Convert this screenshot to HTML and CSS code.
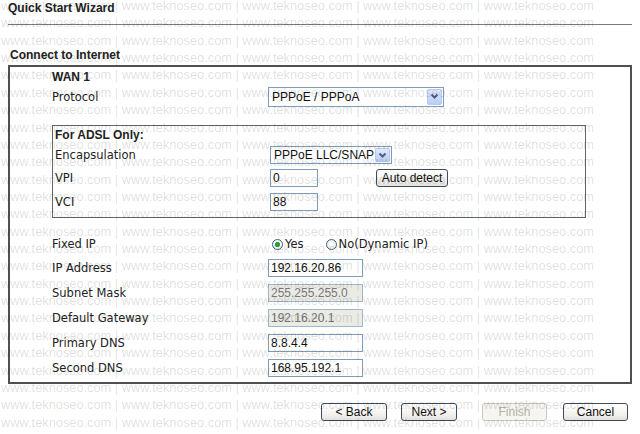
FILE: index.html
```html
<!DOCTYPE html>
<html lang="en">
<head>
  <meta charset="UTF-8">
  <title>Quick Start Wizard</title>
  <link rel="stylesheet" href="styles.css">
</head>
<body>
  <div class="page">
    <h1 class="title">Quick Start Wizard</h1>
    <h2 class="section-title">Connect to Internet</h2>

    <div class="panel">
      <div class="row row-head"><span class="label bold">WAN 1</span></div>
      <div class="row row-protocol">
        <span class="label">Protocol</span>
        <span class="select select-protocol">
          <select><option>PPPoE / PPPoA</option></select>
          <span class="arrow"><svg width="9" height="7" viewBox="0 0 9 7"><path d="M1.5 1.5 L4.5 4.5 L7.5 1.5" fill="none" stroke="#4d6185" stroke-width="2"/></svg></span>
        </span>
      </div>

      <div class="adsl">
        <div class="row row-adsl-head"><span class="label bold">For ADSL Only:</span></div>
        <div class="row row-encap">
          <span class="label">Encapsulation</span>
          <span class="select select-encap">
            <select><option>PPPoE LLC/SNAP</option></select>
            <span class="arrow"><svg width="9" height="7" viewBox="0 0 9 7"><path d="M1.5 1.5 L4.5 4.5 L7.5 1.5" fill="none" stroke="#4d6185" stroke-width="2"/></svg></span>
          </span>
        </div>
        <div class="row row-adsl">
          <span class="label">VPI</span>
          <span class="field">
            <input class="text short" value="0">
            <button class="btn btn-detect">Auto detect</button>
          </span>
        </div>
        <div class="row row-adsl">
          <span class="label">VCI</span>
          <span class="field"><input class="text short" value="88"></span>
        </div>
      </div>

      <div class="row row-fixed">
        <span class="label">Fixed IP</span>
        <span class="radio-group">
          <input type="radio" name="fixed" id="fixedYes" checked>
          <label for="fixedYes">Yes</label>
          <input type="radio" name="fixed" id="fixedNo" class="radio-no">
          <label for="fixedNo">No(Dynamic IP)</label>
        </span>
      </div>
      <div class="row row-ip">
        <span class="label">IP Address</span>
        <span class="field"><input class="text" value="192.16.20.86"></span>
      </div>
      <div class="row row-ip">
        <span class="label">Subnet Mask</span>
        <span class="field"><input class="text" value="255.255.255.0" disabled></span>
      </div>
      <div class="row row-ip">
        <span class="label">Default Gateway</span>
        <span class="field"><input class="text" value="192.16.20.1" disabled></span>
      </div>
      <div class="row row-ip">
        <span class="label">Primary DNS</span>
        <span class="field"><input class="text" value="8.8.4.4"></span>
      </div>
      <div class="row row-ip">
        <span class="label">Second DNS</span>
        <span class="field"><input class="text" value="168.95.192.1"></span>
      </div>
    </div>

    <div class="actions">
      <button class="btn btn-back">&lt; Back</button>
      <button class="btn btn-next">Next &gt;</button>
      <button class="btn btn-finish" disabled>Finish</button>
      <button class="btn btn-cancel">Cancel</button>
    </div>
  </div>

  <div class="watermark" aria-hidden="true">
    <div>www.teknoseo.com | www.teknoseo.com | www.teknoseo.com | www.teknoseo.com | www.teknoseo.com</div>
    <div>www.teknoseo.com | www.teknoseo.com | www.teknoseo.com | www.teknoseo.com | www.teknoseo.com</div>
    <div>www.teknoseo.com | www.teknoseo.com | www.teknoseo.com | www.teknoseo.com | www.teknoseo.com</div>
    <div>www.teknoseo.com | www.teknoseo.com | www.teknoseo.com | www.teknoseo.com | www.teknoseo.com</div>
    <div>www.teknoseo.com | www.teknoseo.com | www.teknoseo.com | www.teknoseo.com | www.teknoseo.com</div>
    <div>www.teknoseo.com | www.teknoseo.com | www.teknoseo.com | www.teknoseo.com | www.teknoseo.com</div>
    <div>www.teknoseo.com | www.teknoseo.com | www.teknoseo.com | www.teknoseo.com | www.teknoseo.com</div>
    <div>www.teknoseo.com | www.teknoseo.com | www.teknoseo.com | www.teknoseo.com | www.teknoseo.com</div>
    <div>www.teknoseo.com | www.teknoseo.com | www.teknoseo.com | www.teknoseo.com | www.teknoseo.com</div>
    <div>www.teknoseo.com | www.teknoseo.com | www.teknoseo.com | www.teknoseo.com | www.teknoseo.com</div>
    <div>www.teknoseo.com | www.teknoseo.com | www.teknoseo.com | www.teknoseo.com | www.teknoseo.com</div>
    <div>www.teknoseo.com | www.teknoseo.com | www.teknoseo.com | www.teknoseo.com | www.teknoseo.com</div>
    <div>www.teknoseo.com | www.teknoseo.com | www.teknoseo.com | www.teknoseo.com | www.teknoseo.com</div>
    <div>www.teknoseo.com | www.teknoseo.com | www.teknoseo.com | www.teknoseo.com | www.teknoseo.com</div>
    <div>www.teknoseo.com | www.teknoseo.com | www.teknoseo.com | www.teknoseo.com | www.teknoseo.com</div>
    <div>www.teknoseo.com | www.teknoseo.com | www.teknoseo.com | www.teknoseo.com | www.teknoseo.com</div>
    <div>www.teknoseo.com | www.teknoseo.com | www.teknoseo.com | www.teknoseo.com | www.teknoseo.com</div>
    <div>www.teknoseo.com | www.teknoseo.com | www.teknoseo.com | www.teknoseo.com | www.teknoseo.com</div>
    <div>www.teknoseo.com | www.teknoseo.com | www.teknoseo.com | www.teknoseo.com | www.teknoseo.com</div>
    <div>www.teknoseo.com | www.teknoseo.com | www.teknoseo.com | www.teknoseo.com | www.teknoseo.com</div>
    <div>www.teknoseo.com | www.teknoseo.com | www.teknoseo.com | www.teknoseo.com | www.teknoseo.com</div>
    <div>www.teknoseo.com | www.teknoseo.com | www.teknoseo.com | www.teknoseo.com | www.teknoseo.com</div>
    <div>www.teknoseo.com | www.teknoseo.com | www.teknoseo.com | www.teknoseo.com | www.teknoseo.com</div>
    <div>www.teknoseo.com | www.teknoseo.com | www.teknoseo.com | www.teknoseo.com | www.teknoseo.com</div>
    <div>www.teknoseo.com | www.teknoseo.com | www.teknoseo.com | www.teknoseo.com | www.teknoseo.com</div>
    <div>www.teknoseo.com | www.teknoseo.com | www.teknoseo.com | www.teknoseo.com | www.teknoseo.com</div>
  </div>
</body>
</html>
```

FILE: styles.css
```css
body {
  margin: 0;
  background: #fff;
  font-family: "DejaVu Sans", Verdana, sans-serif;
  font-size: 11.5px;
  color: #222;
}
.page {
  width: 624px;
  padding-left: 8px;
}
.title {
  margin: 0;
  padding: 1px 0 9px;
  font: bold 12px/14px "Liberation Sans", Arial, sans-serif;
  color: #222;
  border-bottom: 1px solid #7a7a7a;
}
.section-title {
  margin: 23px 0 3px 2px;
  font: bold 12px/14px "Liberation Sans", Arial, sans-serif;
  color: #222;
}
.panel {
  box-sizing: border-box;
  width: 624px;
  border: 2px solid #505050;
  padding: 0 0 2px 42px;
}
.row {
  display: grid;
  grid-template-columns: 216px auto;
  align-items: center;
}
.bold {
  font: bold 12px "Liberation Sans", Arial, sans-serif;
  color: #222;
}
.row-head {
  height: 19px;
}
.row-protocol {
  height: 21px;
}
.adsl {
  box-sizing: border-box;
  width: 534px;
  margin-top: 18px;
  border: 1px solid #666;
  padding: 0 0 3px 2px;
}
.adsl .row {
  grid-template-columns: 215px auto;
}
.row-adsl-head {
  height: 18px;
}
.row-encap {
  height: 22px;
}
.row-adsl {
  height: 24px;
}
.row-fixed {
  height: 22px;
  margin-top: 15px;
}
.row-ip {
  height: 25px;
}
.field {
  display: flex;
  align-items: center;
}

/* inputs */
.text {
  box-sizing: border-box;
  width: 95px;
  height: 18px;
  margin: 0;
  padding: 0 2px;
  border: 1px solid #7f9db9;
  font: 12px "Liberation Sans", Arial, sans-serif;
  color: #111;
  background: #fff;
}
.text.short {
  width: 48px;
}
.text:disabled {
  background: #ebebe6;
  color: #777;
  border-color: #a3b5c8;
}

/* selects */
.select {
  box-sizing: border-box;
  display: inline-flex;
  align-items: stretch;
  border: 1px solid #7f9db9;
  background: #fff;
}
.select-protocol {
  width: 176px;
  height: 20px;
}
.select-encap {
  width: 122px;
  height: 18px;
}
.select select {
  appearance: none;
  flex: 1;
  min-width: 0;
  margin: 0;
  border: 0;
  padding: 0 0 0 3px;
  background: transparent;
  font: 12px "Liberation Sans", Arial, sans-serif;
  color: #111;
  outline: none;
}
.arrow {
  box-sizing: border-box;
  width: 15px;
  margin: 1px;
  display: flex;
  align-items: center;
  justify-content: center;
  border: 1px solid #b8c9ee;
  border-radius: 2px;
  background: linear-gradient(#e3ebfd, #b9ccf6);
}

/* radios */
.radio-group {
  display: flex;
  align-items: center;
}
.radio-group input {
  appearance: none;
  box-sizing: border-box;
  width: 11px;
  height: 11px;
  margin: 1px 2px 0 4px;
  border: 1px solid #3d5e86;
  border-radius: 50%;
  background: radial-gradient(circle, #fff 0, #e6e6e0 100%);
}
.radio-group input:checked {
  background: radial-gradient(circle, #2ca12c 0, #2ca12c 2.2px, #fff 3px, #ececec 100%);
}
.radio-group .radio-no {
  margin-left: 22px;
}
.radio-group label {
  color: #222;
}

/* buttons */
.btn {
  box-sizing: border-box;
  height: 18px;
  margin: 0;
  padding: 0;
  border: 1px solid #3f4b5e;
  border-radius: 3px;
  background: linear-gradient(#fff, #f1f0ec 70%, #e2e0da);
  font: 12px "Liberation Sans", Arial, sans-serif;
  color: #111;
  cursor: pointer;
}
.btn:disabled {
  border-color: #cbc9be;
  color: #b3b1a5;
  background: #f6f5f1;
  cursor: default;
}
.btn-detect {
  width: 72px;
  margin-left: 58px;
}
.actions {
  display: flex;
  justify-content: flex-end;
  margin-top: 19px;
  padding-right: 4px;
}
.btn-back {
  width: 66px;
}
.btn-next {
  width: 56px;
  margin-left: 14px;
}
.btn-finish {
  width: 65px;
  margin-left: 25px;
}
.btn-cancel {
  width: 65px;
  margin-left: 16px;
}

/* watermark over the whole page */
.watermark {
  position: absolute;
  top: -3px;
  left: 0;
  width: 640px;
  height: 437px;
  overflow: hidden;
  padding-left: 1px;
  box-sizing: border-box;
  pointer-events: none;
  white-space: nowrap;
  font: 12.8px/17.36px "Liberation Sans", Arial, sans-serif;
  color: rgba(0, 0, 0, 0.14);
}
```
